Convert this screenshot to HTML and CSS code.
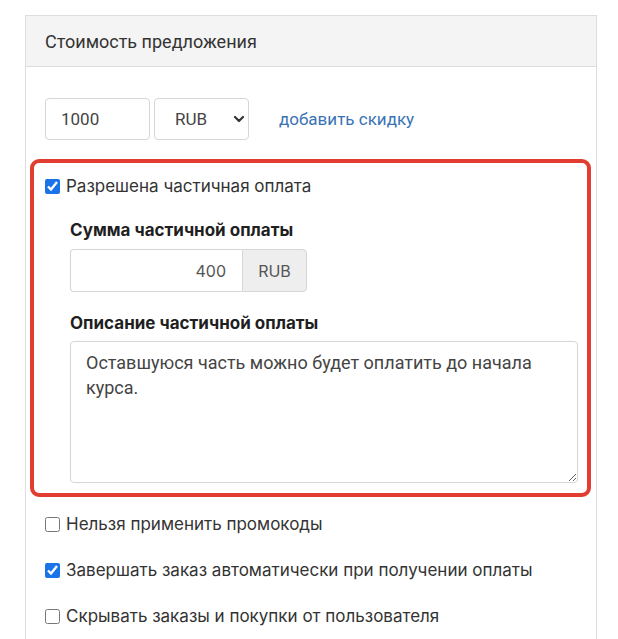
FILE: index.html
```html
<!DOCTYPE html>
<html lang="ru">
<head>
<meta charset="utf-8">
<link rel="stylesheet" href="styles.css">
</head>
<body>
<div class="panel">
  <div class="panel-header">Стоимость предложения</div>
  <div class="panel-body">
    <div class="price-row">
      <div class="field price-input">1000</div>
      <div class="field price-select">
        <span>RUB</span>
        <svg class="chev" width="12" height="8" viewBox="0 0 12 8"><path d="M2 2 L6 6 L10 2" fill="none" stroke="#333" stroke-width="2.2" stroke-linecap="round" stroke-linejoin="round"/></svg>
      </div>
      <a class="discount-link" href="#">добавить скидку</a>
    </div>

    <div class="highlight">
      <label class="check"><input type="checkbox" checked><span>Разрешена частичная оплата</span></label>
      <div class="sub">
        <div class="sub-label">Сумма частичной оплаты</div>
        <div class="input-group">
          <div class="ig-input">400</div>
          <div class="ig-addon">RUB</div>
        </div>
        <div class="sub-label second">Описание частичной оплаты</div>
        <textarea class="desc">Оставшуюся часть можно будет оплатить до начала курса.</textarea>
      </div>
    </div>

    <div class="options">
      <label class="check"><input type="checkbox"><span>Нельзя применить промокоды</span></label>
      <label class="check"><input type="checkbox" checked><span>Завершать заказ автоматически при получении оплаты</span></label>
      <label class="check"><input type="checkbox"><span>Скрывать заказы и покупки от пользователя</span></label>
    </div>
  </div>
</div>
</body>
</html>
```

FILE: styles.css
```css
* { box-sizing: border-box; }
html, body { margin: 0; padding: 0; background: #fff; }
body { font-family: Roboto, "Liberation Sans", sans-serif; color: #333; overflow: hidden; height: 639px; }

.panel {
  margin: 15px 0 0 25px;
  width: 572px;
  height: 624px;
  border: 1px solid #dddddd;
  border-bottom: none;
}
.panel-header {
  height: 51px;
  background: #f4f4f4;
  border-bottom: 1px solid #dddddd;
  padding-left: 19px;
  display: flex;
  align-items: center;
  font-size: 18px;
  color: #333;
}
.panel-body {
  padding: 31px 19px 0 19px;
}
.price-row {
  display: flex;
  align-items: center;
  height: 42px;
}
.field {
  height: 42px;
  border: 1px solid #d6d6d6;
  border-radius: 4px;
  font-size: 17px;
  display: flex;
  align-items: center;
  color: #444;
}
.price-input { width: 105px; padding-left: 15px; }
.price-select {
  width: 95px;
  margin-left: 4px;
  padding: 0 3px 0 20px;
  justify-content: space-between;
}
.chev { display: block; }
.discount-link {
  margin-left: 30px;
  color: #3a73b5;
  text-decoration: none;
  font-size: 17px;
}

.highlight {
  margin: 19px -14px 0 -15px;
  border: 4px solid #e23d33;
  border-radius: 9px;
  padding: 12px 9px 10px 11px;
}
.check {
  display: flex;
  align-items: center;
  font-family: Inter, "Noto Sans", sans-serif;
  font-size: 17px;
  color: #333;
  height: 22px;
}
.check input {
  width: 15px;
  height: 15px;
  margin: 0 6px 0 0;
  accent-color: #1a73e8;
}
.sub { padding-left: 25px; }
.sub-label {
  font-family: Inter, "Noto Sans", sans-serif;
  font-weight: 700;
  font-size: 17px;
  color: #1f1f1f;
  margin-top: 23px;
  height: 20px;
  line-height: 20px;
}
.sub-label.second { margin-top: 21px; }
.input-group {
  display: flex;
  margin-top: 9px;
  width: 237px;
  height: 43px;
}
.ig-input {
  flex: 1;
  border: 1px solid #d6d6d6;
  border-right: none;
  border-radius: 4px 0 0 4px;
  display: flex;
  align-items: center;
  justify-content: flex-end;
  padding-right: 16px;
  font-family: Inter, "Noto Sans", sans-serif;
  font-size: 16px;
  color: #555;
}
.ig-addon {
  width: 65px;
  border: 1px solid #d6d6d6;
  border-radius: 0 4px 4px 0;
  background: #eeeeee;
  display: flex;
  align-items: center;
  justify-content: center;
  font-family: Inter, "Noto Sans", sans-serif;
  font-size: 16px;
  color: #555;
}
.desc {
  display: block;
  margin-top: 8px;
  width: 508px;
  height: 142px;
  border: 1px solid #d6d6d6;
  border-radius: 4px;
  padding: 8px 15px;
  font-family: Roboto, "Liberation Sans", sans-serif;
  font-size: 18px;
  line-height: 25px;
  color: #444;
  resize: vertical;
}
.options {
  display: flex;
  flex-direction: column;
  gap: 24px;
  padding-top: 16px;
}
```
